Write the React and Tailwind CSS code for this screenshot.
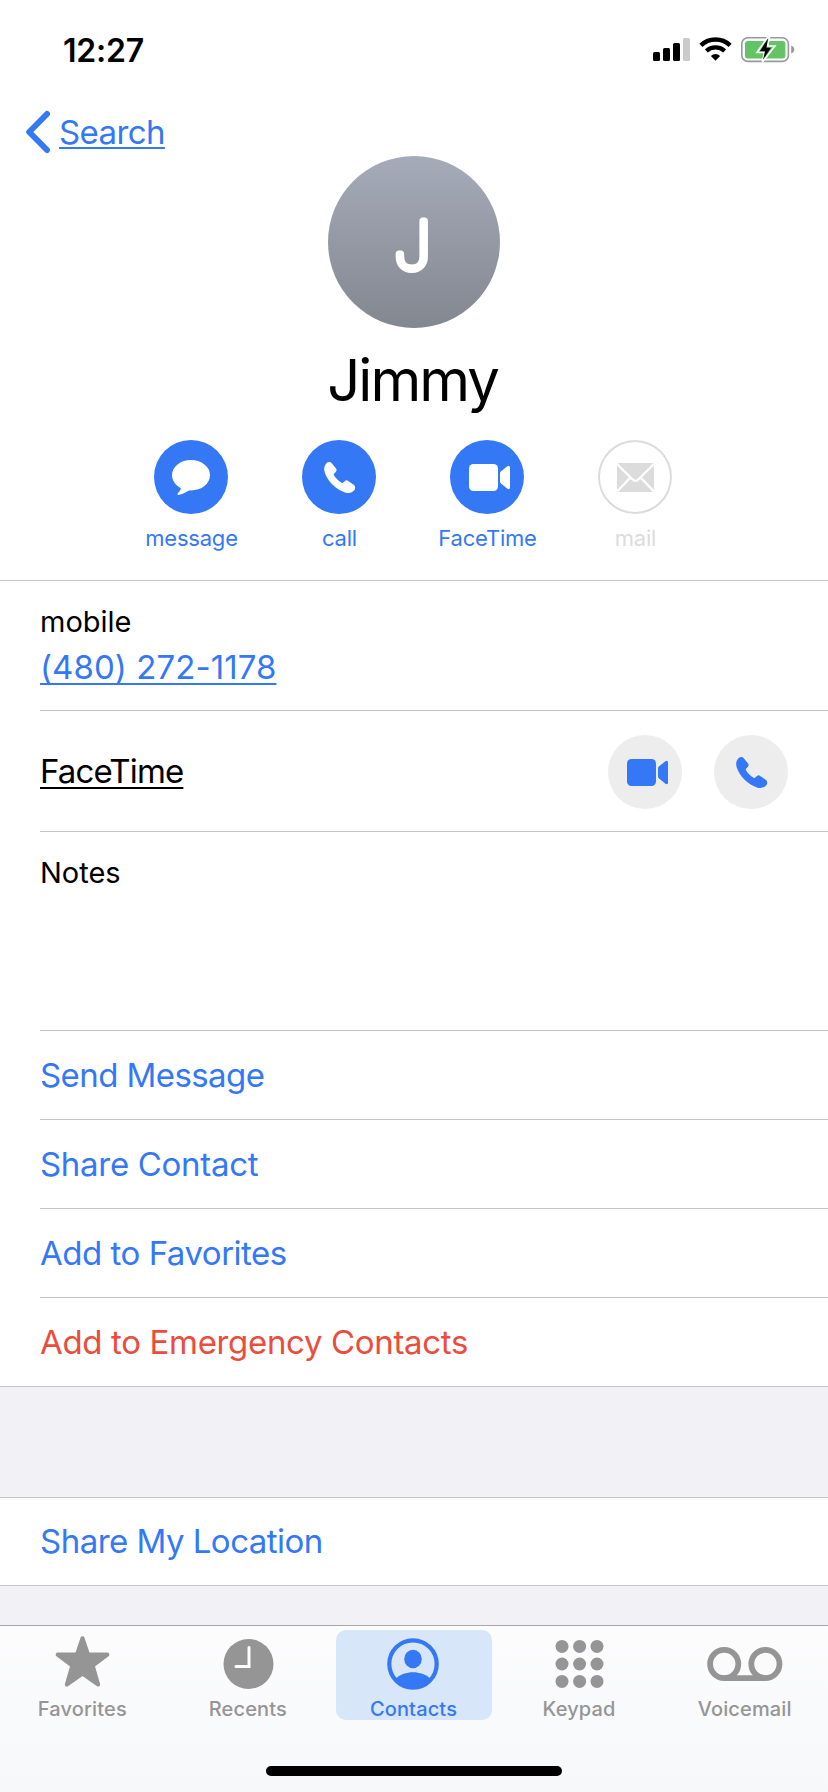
const PhoneGlyph = () => (
  <svg viewBox="0 0 74 74" className="size-[74px]" fill="currentColor">
    <path d="M24.5 23.2C26 21.8 28.5 21.6 29.8 23.2L34 28.6C34.9 29.8 34.7 31 33.9 31.8L32.2 33.6C31.6 34.3 31.7 34.9 32.1 35.5C34 38.6 36.6 41 39.3 42.6C40 43.1 40.7 43 41.2 42.4L43 40.9C44 40.1 45.2 40.2 46.2 40.9L52 45C53.6 46.3 53.6 48.6 52.3 50.3C50.3 52.7 46.9 53.6 43 52.4C33.7 49.3 25.5 41.2 22.7 32.3C21.6 28.5 22.3 25.2 24.5 23.2Z" />
  </svg>
);

const VideoGlyph = () => (
  <svg viewBox="0 0 74 74" className="size-[74px]" fill="currentColor">
    <rect x="19" y="24" width="29" height="27" rx="4.5" />
    <path d="M50 33.2Q50 32.2 50.8 31.5L57.4 26.3Q60 25 60 27.6V47.4Q60 50 57.4 48.7L50.8 43.3Q50 42.6 50 41.6Z" />
  </svg>
);

const MessageGlyph = () => (
  <svg viewBox="0 0 74 74" className="size-[74px]" fill="currentColor">
    <ellipse cx="37" cy="35.2" rx="19" ry="15.3" />
    <path d="M26 46.5C27.8 48.5 26.5 50.5 23.8 53.4C23 54.5 23.8 55.2 25.2 54.8C29.5 54.2 32.5 51.6 35.5 50.2L38 47Z" />
  </svg>
);

const MailGlyph = () => (
  <svg viewBox="0 0 74 74" className="size-[74px]">
    <rect x="19" y="23" width="37" height="29" rx="2" fill="#dcdcdc" />
    <path d="M19 24L34.4 39.3Q37.5 42.4 40.6 39.3L56 24M19 51.5L32 38M56 51.5L43 38" fill="none" stroke="#fff" strokeWidth="2.3" />
  </svg>
);

const actions = [
  { label: 'message', icon: MessageGlyph },
  { label: 'call', icon: PhoneGlyph },
  { label: 'FaceTime', icon: VideoGlyph },
  { label: 'mail', icon: MailGlyph, disabled: true },
];

const links = [
  { text: 'Send Message', tracking: 'tracking-[-0.58px]' },
  { text: 'Share Contact', tracking: 'tracking-[-0.3px]' },
  { text: 'Add to Favorites', tracking: 'tracking-[-0.48px]' },
];

const StarIcon = () => (
  <svg viewBox="0 0 80 58" className="w-20 h-[58px] shrink-0">
    <path d="M39.5 3.2L45.1 19.6H64.4L49.7 30.6L55.2 49.6L39.5 38.6L23.8 49.6L29.3 30.6L14.6 19.6H33.9Z" fill="currentColor" stroke="currentColor" strokeWidth="4" strokeLinejoin="round" />
  </svg>
);

const ClockIcon = () => (
  <svg viewBox="0 0 80 58" className="w-20 h-[58px] shrink-0">
    <circle cx="40.5" cy="29" r="25" fill="currentColor" />
    <path d="M41 12.5V31.5H28" fill="none" stroke="#fff" strokeWidth="3" strokeLinecap="round" />
  </svg>
);

const PersonIcon = () => (
  <svg viewBox="0 0 80 58" className="w-20 h-[58px] shrink-0">
    <circle cx="39" cy="29" r="23.7" fill="none" stroke="currentColor" strokeWidth="4.2" />
    <ellipse cx="39" cy="24" rx="8.8" ry="9.2" fill="currentColor" />
    <path d="M21.5 43.5C31 35 47 35 56.5 43.5A23.7 23.7 0 0 1 21.5 43.5Z" fill="currentColor" />
  </svg>
);

const KeypadIcon = () => (
  <svg viewBox="0 0 80 58" className="w-20 h-[58px] shrink-0" fill="currentColor">
    {[11.4, 29, 46.4].map(y =>
      [22, 39.6, 57].map(x => <circle key={`${x}-${y}`} cx={x} cy={y} r="6.5" />)
    )}
  </svg>
);

const VoicemailIcon = () => (
  <svg viewBox="0 0 80 58" className="w-20 h-[58px] shrink-0" fill="none" stroke="currentColor" strokeWidth="5.8">
    <circle cx="19.2" cy="29" r="14.1" />
    <circle cx="60.4" cy="29" r="14.1" />
    <path d="M19.2 43.1H60.4" />
  </svg>
);

const tabs = [
  { label: 'Favorites', icon: StarIcon },
  { label: 'Recents', icon: ClockIcon },
  { label: 'Contacts', icon: PersonIcon, active: true },
  { label: 'Keypad', icon: KeypadIcon },
  { label: 'Voicemail', icon: VoicemailIcon },
];

function StatusBar() {
  return (
    <div className="flex h-[100px] items-center justify-between pl-[63px] pr-[33px]">
      <span className="pt-0.5 text-[32px] font-semibold leading-none tracking-[-0.2px]">12:27</span>
      <svg viewBox="0 0 144 28" className="h-7 w-36">
        <rect x="2" y="16" width="7" height="9" rx="1.5" />
        <rect x="12" y="12" width="7" height="13" rx="1.5" />
        <rect x="22" y="7" width="7" height="18" rx="1.5" />
        <rect x="32" y="2" width="7" height="23" rx="1.5" fill="#cbcbcb" />
        {/* wifi */}
        <g fill="none" stroke="#000">
          <path d="M49.9 9.3A21.2 21.2 0 0 1 79.1 9.3" strokeWidth="4.4" />
          <path d="M55.4 15.1A13.2 13.2 0 0 1 73.6 15.1" strokeWidth="4.2" />
        </g>
        <path d="M59.9 19.9A6.7 6.7 0 0 1 69.1 19.9L64.5 24.8Z" />
        {/* battery */}
        <rect x="90.8" y="1.8" width="46.6" height="23.6" rx="6" fill="none" stroke="#999" strokeWidth="1.6" />
        <rect x="94" y="5" width="40.4" height="17.4" rx="3" fill="#63c466" />
        <path d="M140.2 9.5Q143.3 10.7 143.3 13.5T140.2 17.5Z" fill="#999" />
        <path d="M116.5 1.5L106 16.4H113.5L111.5 26L123.8 10H116.6L118.4 1.5Z" fill="#63c466" stroke="#fff" strokeWidth="1.7" />
        <path d="M117 2.6L108.8 15.2H114L112 23.8L120 11.8H115.4Z" />
      </svg>
    </div>
  );
}

function TabBar() {
  return (
    <nav className="flex h-[167px] flex-col border-t border-[#a7a7ab] bg-linear-to-b from-[#fcfcfd] to-[#f7f8fa]">
      <div className="grid grid-cols-5 pt-1">
        {tabs.map(tab => (
          <div key={tab.label} className={`mx-auto flex h-[90px] w-[156px] flex-col items-center rounded-[10px] pt-[5px] ${tab.active ? 'bg-[#d7e6f8] text-[#3478f6]' : 'text-[#959596]'}`}>
            <tab.icon />
            <span className="mt-1 pr-px text-[20px] font-medium leading-6 tracking-[0.15px]">{tab.label}</span>
          </div>
        ))}
      </div>
      <div className="mx-auto mt-[46px] h-[10px] w-[296px] rounded-full bg-black" />
    </nav>
  );
}

export default function App() {
  return (
    <div className="flex h-[1792px] w-[828px] flex-col overflow-hidden bg-[#f2f1f6] font-['Inter',sans-serif] text-black">
      <header className="h-[581px] border-b border-[#c6c6c8] bg-white">
        <StatusBar />
        <div className="flex h-14 items-center pl-[25px] pt-2 text-[#3478f6]">
          <svg viewBox="0 0 26 44" className="h-11 w-[26px]" fill="none" stroke="currentColor" strokeWidth="6" strokeLinecap="round" strokeLinejoin="round">
            <path d="M22 4L4.2 22L22 40" />
          </svg>
          <span className="ml-2 text-[33px] leading-10 tracking-[-0.6px] underline decoration-2 underline-offset-[3px]">Search</span>
        </div>
        <div className="flex flex-col items-center">
          <div className="size-[172px] rounded-full bg-linear-to-b from-[#a6abb9] to-[#838790]">
            <svg viewBox="0 0 172 172" className="size-full">
              <text x="84.5" y="112.5" textAnchor="middle" fontSize="66" fontWeight="100" fill="#fff" stroke="#fff" strokeWidth="7" strokeLinejoin="round" strokeLinecap="round">J</text>
            </svg>
          </div>
          <h1 className="mt-[17px] pr-[3px] text-[58px] font-normal leading-[70px] tracking-[-2px]">Jimmy</h1>
        </div>
        <div className="flex justify-center pr-0.5 pt-[25px]">
          {actions.map(({ label, icon: Icon, disabled }) => (
            <div key={label} className={`flex w-[148px] flex-col items-center ${disabled ? 'text-[#dcdcdc]' : 'text-[#3478f6]'}`}>
              <div className={`size-[74px] rounded-full ${disabled ? 'bg-white shadow-[inset_0_0_0_2px_#dcdcdc]' : 'bg-[#3478f6] text-white'}`}>
                <Icon />
              </div>
              <span className="mt-2.5 pl-px text-[22px] leading-7 tracking-[-0.2px]">{label}</span>
            </div>
          ))}
        </div>
      </header>

      <section className="border-b border-[#c6c6c8] bg-white pl-10">
        <div className="h-[130px] border-b border-[#c6c6c8] pt-[23px]">
          <p className="text-[29px] leading-9">mobile</p>
          <p className="mt-[7px] text-[33px] leading-10 tracking-[0.07px] text-[#3478f6] underline decoration-2 underline-offset-4">(480) 272-1178</p>
        </div>
        <div className="flex h-[121px] items-center gap-8 border-b border-[#c6c6c8] pr-10 pt-0.5">
          <span className="flex-1 pb-0.5 text-[33px] leading-10 tracking-[-0.85px] underline decoration-2 underline-offset-4">FaceTime</span>
          <div className="size-[74px] rounded-full bg-[#ededed] text-[#3478f6]"><VideoGlyph /></div>
          <div className="size-[74px] rounded-full bg-[#ededed] text-[#3478f6]"><PhoneGlyph /></div>
        </div>
        <div className="h-[199px] border-b border-[#c6c6c8] pt-[21px]">
          <p className="text-[29px] leading-10">Notes</p>
        </div>
        {links.map(({ text, tracking }) => (
          <div key={text} className={`flex h-[89px] items-center border-b border-[#c6c6c8] pt-px text-[33px] text-[#3478f6] ${tracking}`}>{text}</div>
        ))}
        <div className="flex h-[88px] items-center pt-px text-[33px] tracking-[-0.34px] text-[#eb4d3d]">Add to Emergency Contacts</div>
      </section>

      <section className="mt-[110px] flex h-[89px] shrink-0 items-center border-y border-[#c6c6c8] bg-white pl-10 text-[33px] tracking-[-0.52px] text-[#3478f6]">
        Share My Location
      </section>

      <div className="mt-auto">
        <TabBar />
      </div>
    </div>
  );
}
